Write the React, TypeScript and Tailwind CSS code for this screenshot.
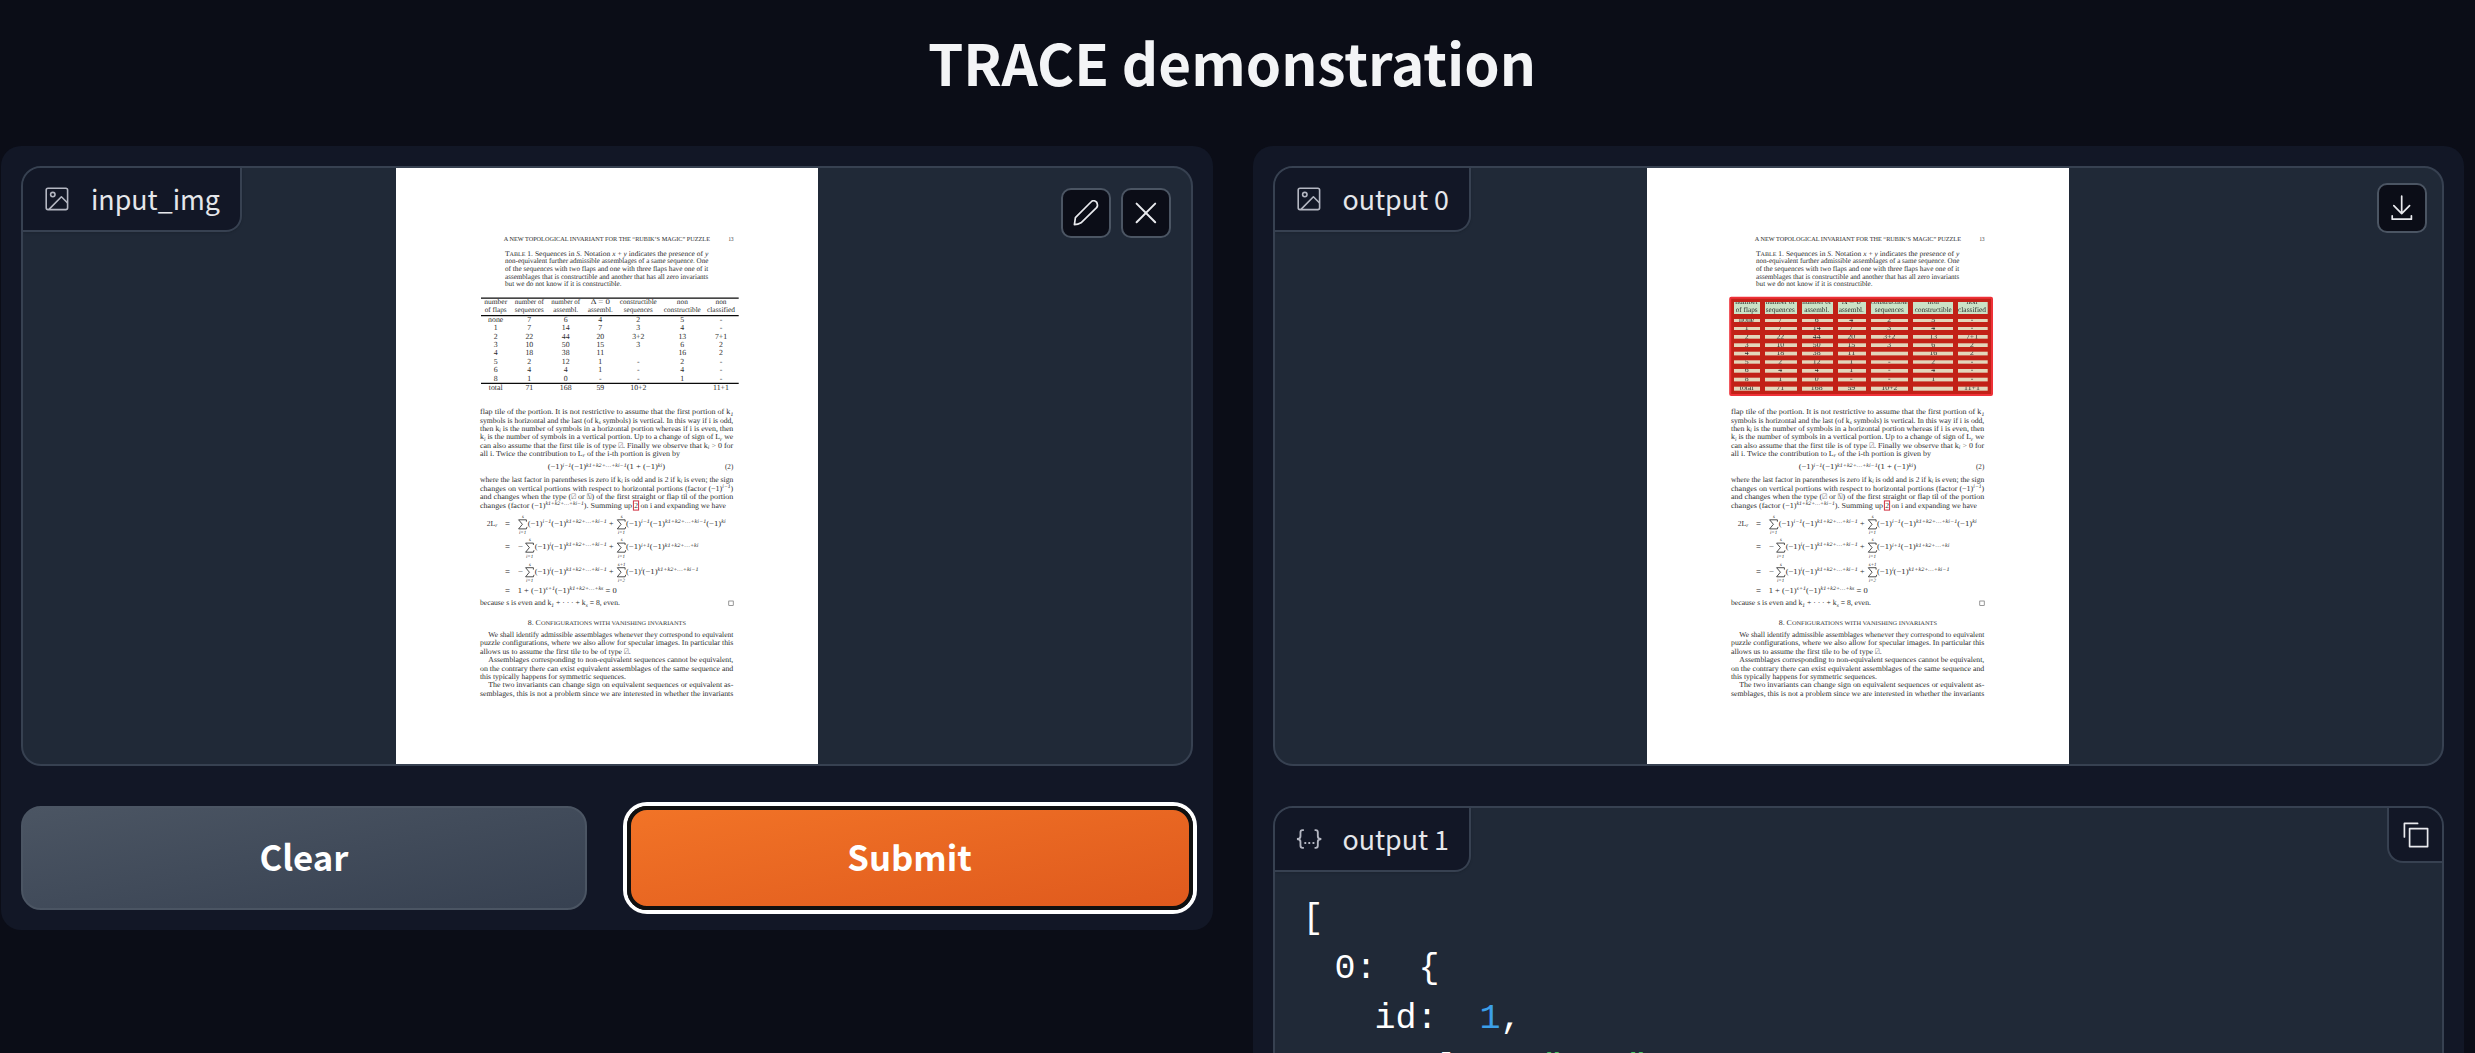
import type { ReactNode } from "react";

/* ---------- document page ---------- */

const SERIF = '"Liberation Serif", "DejaVu Serif", serif';

/* Splits "_{..}" (lowered) and "^{..}" (raised) runs out of a line of text. */
function typeset(line: string): ReactNode {
  let level = 0;
  return line
    .split(/([_^]\{[^}]*\})/)
    .filter(Boolean)
    .map((p, n) => {
      const next = p.startsWith("^{") ? -2.6 : p.startsWith("_{") ? 1.2 : 0;
      const dy = next - level;
      level = next;
      return next === 0 ? (
        <tspan key={n} dy={dy}>{p}</tspan>
      ) : (
        <tspan key={n} dy={dy} fontSize={5.4} fontStyle="italic">{p.slice(2, -1)}</tspan>
      );
    });
}

function T({ x, r, y, s = 7.6, children }: { x: number; r?: number; y: number; s?: number; children: ReactNode }) {
  return (
    <text x={x} y={y} fontSize={s} textLength={r ? r - x : undefined} lengthAdjust="spacingAndGlyphs">
      {typeof children === "string" ? typeset(children) : children}
    </text>
  );
}

function Sum({ x, y, lo, hi = "s" }: { x: number; y: number; lo: string; hi?: string }) {
  return (
    <>
      <path
        d={`M${x + 8.4} ${y - 4}V${y - 5.9}H${x + 0.6}L${x + 4.4} ${y - 1.4}L${x + 0.6} ${y + 3.2}H${x + 8.4}L${x + 9} ${y + 1.2}`}
        fill="none"
        stroke="#222"
        strokeWidth={0.8}
      />
      <text x={x + 4.6} y={y + 8.6} fontSize={5} textAnchor="middle" fontStyle="italic">{lo}</text>
      <text x={x + 5} y={y - 7.8} fontSize={5} textAnchor="middle" fontStyle="italic">{hi}</text>
    </>
  );
}

const COLS = [495.7, 529.3, 565.7, 600.3, 638.3, 682.3, 721];
const HEAD: [string, number, string, number][] = [
  ["number", 23, "of flaps", 22],
  ["number of", 29, "sequences", 29],
  ["number of", 29, "assembl.", 25],
  ["Δ = 0", 19, "assembl.", 25],
  ["constructible", 37, "sequences", 29],
  ["non", 11, "constructible", 37],
  ["non", 11, "classified", 28],
];
const ROWS: [number, string[]][] = [
  [321.9, ["none", "7", "6", "4", "2", "5", "-"]],
  [330.2, ["1", "7", "14", "7", "3", "4", "-"]],
  [338.8, ["2", "22", "44", "20", "3+2", "13", "7+1"]],
  [347.2, ["3", "10", "50", "15", "3", "6", "2"]],
  [355.2, ["4", "18", "38", "11", "", "16", "2"]],
  [363.5, ["5", "2", "12", "1", "-", "2", "-"]],
  [372, ["6", "4", "4", "1", "-", "4", "-"]],
  [380.6, ["8", "1", "0", "-", "-", "1", "-"]],
  [389.8, ["total", "71", "168", "59", "10+2", "", "11+1"]],
];
const CELL_X: [number, number][] = [[483, 26], [514, 32], [551, 31], [587, 28], [620, 37], [662, 40], [707, 29.7]];
const CELL_Y: [number, number][] = [
  [302, 12], [319, 3], [327, 3], [335, 3.7], [343.3, 3.7], [351.7, 3.7], [360.3, 3.4], [369, 3.7], [377.7, 3.7], [386.7, 4],
];

function TableText() {
  return (
    <g>
      {HEAD.map(([a, aw, b, bw], n) => (
        <g key={n}>
          <T x={COLS[n] - aw / 2} r={COLS[n] + aw / 2} y={304} s={7.2}>{a}</T>
          <T x={COLS[n] - bw / 2} r={COLS[n] + bw / 2} y={312.4} s={7.2}>{b}</T>
        </g>
      ))}
      {ROWS.map(([y, cells]) =>
        cells.map((c, n) => (
          <text key={`${y}-${n}`} x={COLS[n]} y={y} fontSize={7.8} textAnchor="middle">{c}</text>
        )),
      )}
    </g>
  );
}

const K = "^{k1+k2+…+ki−1}";

const BODY: [number, number, number, string][] = [
  [480, 733.3, 414.3, "flap tile of the portion. It is not restrictive to assume that the first portion of k_{1}"],
  [480, 733.3, 422.7, "symbols is horizontal and the last (of k_{s} symbols) is vertical. In this way if i is odd,"],
  [480, 733.3, 431, "then k_{i} is the number of symbols in a horizontal portion whereas if i is even, then"],
  [480, 733.3, 439.3, "k_{i} is the number of symbols in a vertical portion. Up to a change of sign of L_{r} we"],
  [480, 733.3, 447.7, "can also assume that the first tile is of type ⍁. Finally we observe that k_{i} > 0 for"],
  [480, 680, 456, "all i. Twice the contribution to L_{r} of the i-th portion is given by"],
  [547.7, 665, 469.3, `(−1)^{i−1}(−1)${K}(1 + (−1)^{ki})`],
  [725, 733.3, 469.4, "(2)"],
  [480, 733.3, 482.2, "where the last factor in parentheses is zero if k_{i} is odd and is 2 if k_{i} is even; the sign"],
  [480, 733.3, 490.7, "changes on vertical portions with respect to horizontal portions (factor (−1)^{i−1})"],
  [480, 733.3, 499, "and changes when the type (⍁ or ⍂) of the first straight or flap til of the portion"],
  [480, 632, 507.7, `changes (factor (−1)${K}). Summing up`],
  [640.5, 726, 507.8, "on i and expanding we have"],
  [527.7, 606.7, 525.7, `(−1)^{i−1}(−1)${K}`],
  [626, 725.7, 525.8, `(−1)^{i−1}(−1)${K}(−1)^{ki}`],
  [534.7, 606.7, 549, `(−1)^{i}(−1)${K}`],
  [626, 698.5, 549.1, "(−1)^{i+1}(−1)^{k1+k2+…+ki}"],
  [534.7, 606.7, 573.6, `(−1)^{i}(−1)${K}`],
  [626, 698.5, 573.7, `(−1)^{i}(−1)${K}`],
  [517.7, 616.7, 592.8, "1 + (−1)^{s+1}(−1)^{k1+k2+…+ks} = 0"],
  [480, 620, 605.3, "because s is even and k_{1} + · · · + k_{s} = 8, even."],
  [488.3, 733.3, 637, "We shall identify admissible assemblages whenever they correspond to equivalent"],
  [480, 733.3, 645.2, "puzzle configurations, where we also allow for specular images. In particular this"],
  [480, 630.7, 653.5, "allows us to assume the first tile to be of type ⍁."],
  [488.3, 733.3, 662, "Assemblages corresponding to non-equivalent sequences cannot be equivalent,"],
  [480, 733.3, 670.5, "on the contrary there can exist equivalent assemblages of the same sequence and"],
  [480, 626, 678.9, "this typically happens for symmetric sequences."],
  [488.3, 733.3, 687.4, "The two invariants can change sign on equivalent sequences or equivalent as-"],
  [480, 733.3, 696, "semblages, this is not a problem since we are interested in whether the invariants"],
];

const CAPTION: [number, number, string][] = [
  [708.3, 263.3, "non-equivalent further admissible assemblages of a same sequence. One"],
  [708.3, 271, "of the sequences with two flaps and one with three flaps have one of it"],
  [708.3, 278.7, "assemblages that is constructible and another that has all zero invariants"],
  [621.5, 286, "but we do not know if it is constructible."],
];

function DocumentPage({ detected = false }: { detected?: boolean }) {
  return (
    <svg
      viewBox="396 168 422 596"
      className="block h-full w-[422px] bg-white"
      fontFamily={SERIF}
      fill="#2c2c2c"
      textRendering="geometricPrecision"
    >
      <T x={503.7} r={710} y={241} s={6}>A NEW TOPOLOGICAL INVARIANT FOR THE “RUBIK’S MAGIC” PUZZLE</T>
      <T x={728.5} r={733.5} y={241} s={6}>13</T>
      <T x={505} r={708.3} y={255.5} s={7.2}>
        T<tspan fontSize={5.8}>ABLE</tspan> 1. Sequences in <tspan fontStyle="italic">S</tspan>. Notation <tspan fontStyle="italic">x</tspan> + <tspan fontStyle="italic">y</tspan> indicates the presence of <tspan fontStyle="italic">y</tspan>
      </T>
      {CAPTION.map(([r, y, t]) => (
        <T key={y} x={505} r={r} y={y} s={7.2}>{t}</T>
      ))}

      {detected ? (
        <>
          <rect x={479.2} y={297.8} width={261.8} height={97.2} rx={1} fill="#c22117" stroke="#ee3138" strokeWidth={2} />
          {CELL_Y.map(([y, h], r) =>
            CELL_X.map(([x, w]) => <rect key={`${x}-${y}`} x={x} y={y} width={w} height={h} fill={r ? "#e3d6bb" : "#cbe2c6"} />),
          )}
          <clipPath id="cells">
            {CELL_Y.map(([y, h]) => CELL_X.map(([x, w]) => <rect key={`${x}-${y}`} x={x} y={y} width={w} height={h} />))}
          </clipPath>
          <g clipPath="url(#cells)">
            <TableText />
          </g>
        </>
      ) : (
        <>
          <path d="M481 298.2H738.7M481 315.6H738.7M481 383.4H738.7" stroke="#0a0a0a" strokeWidth={1.2} />
          <TableText />
        </>
      )}

      {BODY.map(([x, r, y, t]) => (
        <T key={`${x}-${y}`} x={x} r={r} y={y}>{t}</T>
      ))}

      <T x={634.2} y={507.7}>2</T>
      <rect x={633.4} y={500.9} width={5.2} height={9.2} fill="none" stroke="#d03040" strokeWidth={1} />

      <T x={486.7} r={497.3} y={525.7}>{"2L_{r}"}</T>
      {[525.7, 549, 573.6, 592.7].map((y) => (
        <T key={y} x={505} r={510} y={y}>=</T>
      ))}
      {[525.7, 549, 573.6].map((y) => (
        <T key={y} x={609} r={613.5} y={y}>+</T>
      ))}
      {[549, 573.6].map((y) => (
        <T key={y} x={518} r={523} y={y}>−</T>
      ))}
      <Sum x={518} y={525.7} lo="i=1" />
      <Sum x={616.7} y={525.7} lo="i=1" />
      <Sum x={525} y={549} lo="i=1" />
      <Sum x={616.7} y={549} lo="i=1" />
      <Sum x={525} y={573.6} lo="i=1" />
      <Sum x={616.7} y={573.6} lo="i=2" hi="s+1" />
      <rect x={728.8} y={601} width={4.4} height={4.6} fill="none" stroke="#555" strokeWidth={0.6} />

      <T x={527.7} r={686} y={624.7} s={7.2}>
        8. C<tspan fontSize={5.8}>ONFIGURATIONS WITH VANISHING INVARIANTS</tspan>
      </T>
    </svg>
  );
}

/* ---------- icons ---------- */

function ImageIcon() {
  return (
    <svg viewBox="0 0 24 24" className="size-6 text-[#b4b7c2]" fill="none" stroke="currentColor" strokeWidth={1.6}>
      <rect x={1.2} y={1.2} width={21.4} height={21.4} rx={1.8} />
      <circle cx={7.8} cy={7.6} r={2.2} />
      <path d="M4 22.4 16.4 9.8 22.6 16" strokeLinejoin="round" />
    </svg>
  );
}

function JsonIcon() {
  return (
    <svg viewBox="0 0 28 22" className="h-[22px] w-7 text-[#b4b7c2]" fill="none" stroke="currentColor" strokeWidth={2}>
      <path d="M8.5 1.5H7Q4.8 1.5 4.8 4V8Q4.8 11 1 11Q4.8 11 4.8 14V18Q4.8 20.5 7 20.5H8.5M20 1.5H21.3Q23.5 1.5 23.5 4V8Q23.5 11 27.3 11Q23.5 11 23.5 14V18Q23.5 20.5 21.3 20.5H20" />
      <path d="M9 15.3h2M13.3 15.3h2M17.8 15.3h2" />
    </svg>
  );
}

function PencilIcon() {
  return (
    <svg viewBox="0 0 26 26" className="size-[26px]" fill="none" stroke="currentColor" strokeWidth={1.7} strokeLinejoin="round">
      <path d="M1.4 24.6 2.4 17.6 18 2A3.6 3.6 0 0 1 24.3 4.3Q24.9 6 23.6 7.6L8 22.8Q5 24.6 1.4 24.6Z" />
    </svg>
  );
}

function CloseIcon() {
  return (
    <svg viewBox="0 0 24 24" className="size-6" fill="none" stroke="currentColor" strokeWidth={2} strokeLinecap="round">
      <path d="M2.6 2.6 21.2 21.2M21.2 2.6 2.6 21.2" />
    </svg>
  );
}

function DownloadIcon() {
  return (
    <svg viewBox="0 0 24 26" className="h-[26px] w-6" fill="none" stroke="currentColor" strokeWidth={1.7} strokeLinecap="round" strokeLinejoin="round">
      <path d="M11.7 1.2V18.6M3.8 10.6 11.7 18.6 19.6 10.6" />
      <path d="M2.2 20.8V24.2H21.4V20.8" />
    </svg>
  );
}

function CopyIcon() {
  return (
    <svg viewBox="0 0 26 26" className="size-[26px]" fill="none" stroke="currentColor" strokeWidth={1.7} strokeLinecap="round" strokeLinejoin="round">
      <rect x={6.6} y={6.6} width={18} height={18} />
      <path d="M1.4 15V1.4H14.6" />
    </svg>
  );
}

/* ---------- building blocks ---------- */

function Label({ icon, text }: { icon: ReactNode; text: string }) {
  return (
    <div className="absolute left-0 top-0 flex h-16 items-center gap-[21px] rounded-br-2xl border-b-2 border-r-2 border-[#374151] bg-[#121726] pl-[21px] pr-5 text-[#e5e7eb] shadow-sm">
      <span className="flex w-[26px] justify-center">{icon}</span>
      <span className="text-[26.8px] leading-[26px]">{text}</span>
    </div>
  );
}

function IconButton({ children, label }: { children: ReactNode; label: string }) {
  return (
    <button aria-label={label} className="flex size-[50px] items-center justify-center rounded-[10px] border-2 border-[#4b5563] bg-[#0b0d17] text-[#e9eaee]">
      {children}
    </button>
  );
}

const BOX = "relative overflow-hidden rounded-[20px] border-2 border-[#374151] bg-[#202937]";

export default function App() {
  return (
    <div className="h-[1053px] w-full overflow-hidden bg-[#0b0d17] font-['Noto_Sans_CJK_SC',sans-serif] text-[#f3f4f6]">
      <h1 className="flex h-[146px] items-start justify-center pr-[11px] pt-[18px] text-[56.6px] font-bold leading-[86px]">TRACE demonstration</h1>

      <main className="flex items-start gap-10 pl-px pr-[11px]">
        <section className="flex flex-1 flex-col gap-10 rounded-[20px] bg-[#121726] p-5">
          <div className={`${BOX} flex h-[600px] justify-center`}>
            <DocumentPage />
            <Label icon={<ImageIcon />} text="input_img" />
            <div className="absolute right-5 top-5 flex gap-[10px]">
              <IconButton label="Edit"><PencilIcon /></IconButton>
              <IconButton label="Remove"><CloseIcon /></IconButton>
            </div>
          </div>
          <div className="grid grid-cols-2 gap-10">
            <button className="h-[104px] rounded-[20px] border-2 border-[#4b5563] bg-linear-to-br from-[#4b5563] to-[#374151] pb-[3px] text-[34.7px] font-bold text-white">
              Clear
            </button>
            <button className="h-[104px] rounded-[20px] border-4 border-[#101010] bg-linear-to-br from-[#f27427] to-[#df591d] bg-origin-border pb-[3px] text-[34.7px] font-bold text-white ring-4 ring-white">
              Submit
            </button>
          </div>
        </section>

        <section className="flex flex-1 flex-col gap-10 rounded-[20px] bg-[#121726] p-5">
          <div className={`${BOX} flex h-[600px] justify-center`}>
            <DocumentPage detected />
            <Label icon={<ImageIcon />} text="output 0" />
            <div className="absolute right-[15px] top-[15px]">
              <IconButton label="Download"><DownloadIcon /></IconButton>
            </div>
          </div>
          <div className={`${BOX} h-[600px]`}>
            <Label icon={<JsonIcon />} text="output 1" />
            <button aria-label="Copy" className="absolute right-0 top-0 flex h-[55px] w-[55px] items-center justify-center rounded-bl-2xl border-b-2 border-l-2 border-[#374151] bg-[#121726] text-[#e9eaee]">
              <CopyIcon />
            </button>
            <div className="whitespace-pre pl-7 pt-[86px] font-['Liberation_Mono',monospace] text-[35px] leading-[50px] text-white">
              <div>[</div>
              <div className="pl-8">0:  {"{"}</div>
              <div className="pl-[72px]">id:  <span className="text-[#3b9fe8]">1</span>,</div>
              <div className="pl-[72px]">angle:  <span className="text-[#4ac466]">"0.0"</span>,</div>
            </div>
          </div>
        </section>
      </main>
    </div>
  );
}
